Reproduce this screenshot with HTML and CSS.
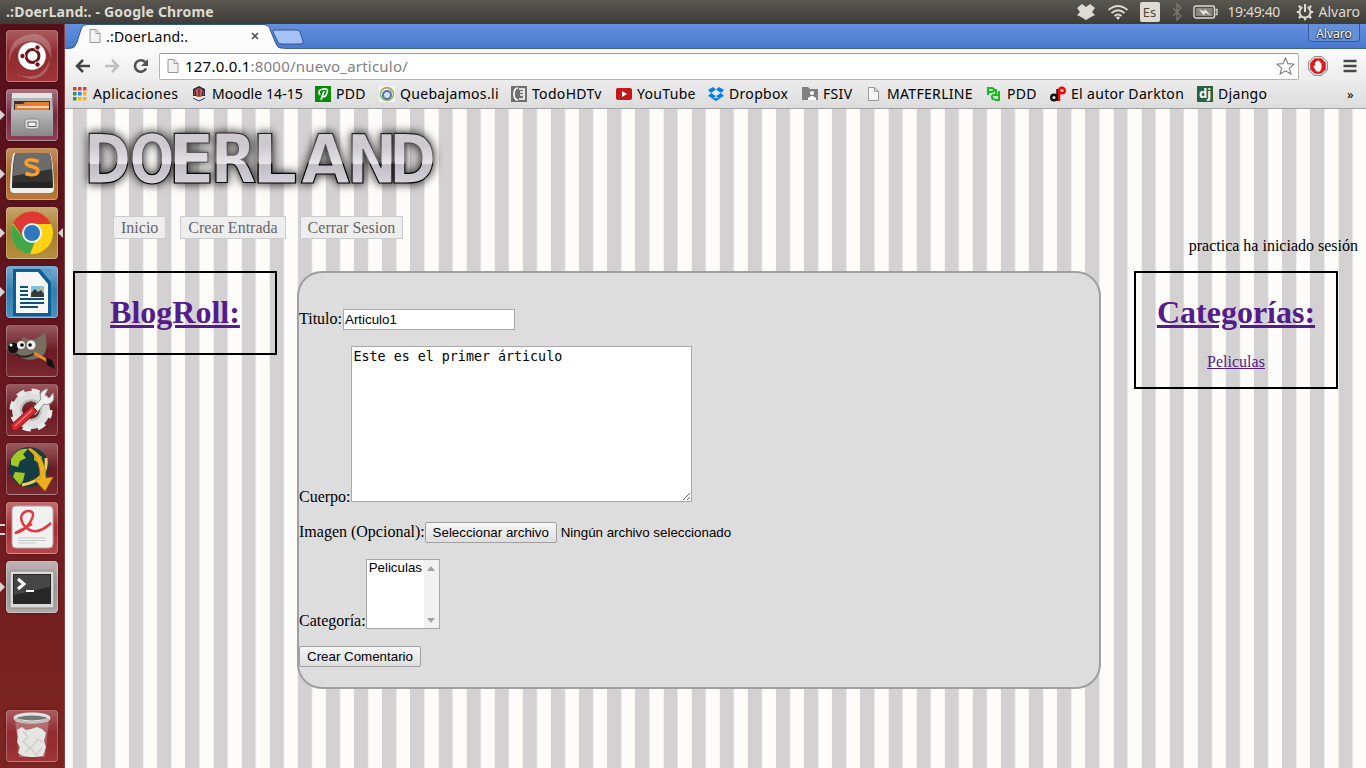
FILE: index.html
```html
<!DOCTYPE html>
<html lang="es">
<head>
<meta charset="utf-8">
<title>.:DoerLand:.</title>
<link rel="stylesheet" href="styles.css">
</head>
<body>
<header class="panel">
  <span class="panel-title">.:DoerLand:. - Google Chrome</span>
  <div class="indicators">
    <svg class="i-drop" width="20" height="18" viewBox="0 0 20 18"><path fill="#dfdbd2" d="M6 1l4 3 4-3 5 4-3 4 3 3-4 2-5 3-5-3-4-2 3-3-3-4z"/></svg>
    <svg class="i-wifi" width="22" height="18" viewBox="0 0 22 18" fill="none" stroke="#dfdbd2" stroke-width="1.700"><path d="M1.500 7q9.500-8 19 0M4.500 10q6.500-5.500 13 0M7.500 13q3.500-3 7 0"/><path fill="#dfdbd2" stroke="none" d="M8.800 14.300q2.200-1.500 4.400 0L11 17z"/></svg>
    <span class="lang">Es</span>
    <svg class="i-bt" width="12" height="18" viewBox="0 0 12 18" fill="none" stroke="#7d7b74" stroke-width="1.300"><path d="M2 5l8 8-4 4V1l4 4-8 8"/></svg>
    <svg class="i-bat" width="25" height="14" viewBox="0 0 25 14"><rect x="1" y="1" width="20.500" height="12" rx="2" fill="none" stroke="#dfdbd2" stroke-width="1.400"/><rect x="3" y="3" width="16.500" height="8" fill="#88867e"/><path d="M22.500 4.500h1.500v5h-1.500" fill="none" stroke="#dfdbd2" stroke-width="1.300"/><path d="M5.500 4l5.500 2.500L12 4l5.500 6.500-5.500-3-1 3z" fill="#eeeae2"/></svg>
    <span class="clock">19:49:40</span>
    <svg class="i-gear" width="18" height="18" viewBox="0 0 18 18" fill="none" stroke="#dfdbd2"><path stroke-width="2" d="M6.500 4.200a5.500 5.500 0 1 0 5 0M9 1v8"/><path stroke-width="2.200" d="M4.500 4.500L2.800 2.800M13.500 4.500l1.700-1.700M3.500 9H.8M14.500 9h2.700M4.800 13.200l-1.900 1.900M13.200 13.200l1.900 1.900M9 14.500v2.700"/></svg>
    <span>Alvaro</span>
  </div>
</header>
<div class="desktop">
<nav class="launcher">
  <div class="tile red"><svg viewBox="0 0 52 52"><path d="M3 33Q1 5 29 4Q48 7 45 29Q40 10 24 11Q6 13 3 33M9 44Q37 53 44 28Q43 49 23 49" fill="#fff" opacity=".22"/><circle cx="26" cy="26" r="13.800" fill="#fff"/><circle cx="26.500" cy="26" r="6.500" fill="none" stroke="#6e1519" stroke-width="3"/><g fill="#6e1519" stroke="#fff" stroke-width="1"><circle cx="16.500" cy="26" r="2.700"/><circle cx="31.500" cy="17.500" r="2.700"/><circle cx="31.500" cy="34.500" r="2.700"/></g></svg></div>
  <div class="tile plum on"><svg viewBox="0 0 52 52"><path d="M6 5h40l1 17v25H5V22z" fill="#b5b5b5"/><path d="M6 4h40v5H6z" fill="#e3e3e3"/><path d="M8 12h36v10H8z" fill="#383434"/><path d="M9 15h8l2-2h24v9H9z" fill="#e47c31"/><path d="M11 18h32" stroke="#fff2de" stroke-width="1.500"/><path d="M6 21h40l1 26H5z" fill="url(#metal)"/><rect x="19" y="30" width="14" height="10" rx="2.500" fill="#ddd" stroke="#858585"/><rect x="22" y="33" width="8" height="4.500" fill="#eee" stroke="#666"/></svg></div>
  <div class="tile orange on"><svg viewBox="0 0 52 52"><path d="M8 5Q5 8 4 40q0 5 4 5h36q4 0 4-5Q47 8 44 5z" fill="#eee"/><path d="M10 5h33q3 1 4 31v3H6v-3Q7 6 10 5z" fill="#333"/><path d="M10 5h33q2 1 3 16L7 28Q8 7 10 5z" fill="#6c6c6c"/><path d="M7 34h39l1 6H6z" fill="#252525"/><path d="M32.500 13.500q-12-4-12.500 1.500c0 4 12 3 12 7.500 0 5-7 5-12.500 3" fill="none" stroke="#ff9d27" stroke-width="3.500"/></svg></div>
  <div class="tile gold on active"><svg viewBox="0 0 52 52"><circle cx="26" cy="26" r="21" fill="#ffd213"/><path d="M16 30L7.500 16 12 10l18 22-6 15A21 21 0 0 1 7 17z" fill="#43a746"/><path d="M7 16A21 21 0 0 1 45 17H26L17 29z" fill="#df3936"/><circle cx="26" cy="26" r="10" fill="#f5f5f5"/><circle cx="26" cy="26" r="8" fill="#2f78bd"/></svg></div>
  <div class="tile blue on"><svg viewBox="0 0 52 52"><path d="M7 3h28l10 11v36H7z" fill="#0e5c91"/><path d="M34 3h11v13z" fill="#5b9bc5"/><path d="M10 6h22l10 12v29H10z" fill="#f6f7f7"/><path d="M14 21h8M14 25h8M14 29h8M14 33h24M14 37h24M14 41h18" stroke="#0e5279" stroke-width="2"/><path d="M25 20h13v11H25z" fill="#80c3e8"/><path d="M25 31v-4l4-4 3 3 3-2 3 4v3z" fill="#383838"/><circle cx="35" cy="22" r="1.500" fill="#ffb31b"/></svg></div>
  <div class="tile wine"><svg viewBox="0 0 52 52"><path d="M13 17l5-5q9 7 21-5 5 22-6 26-16 5-23-5z" fill="#766e60"/><ellipse cx="7" cy="23" rx="5.500" ry="6" fill="#111" stroke="#555"/><circle cx="5" cy="20" r="1.500" fill="#fff"/><circle cx="15" cy="20" r="4" fill="#eee"/><circle cx="25" cy="20" r="4.500" fill="#eee"/><circle cx="16" cy="20" r="1.800"/><circle cx="24" cy="20" r="1.800"/><path d="M10 29q8 6 19-1" fill="none" stroke="#282622" stroke-width="2"/><path d="M28 28l14 8" stroke="#e58b28" stroke-width="3"/><path d="M40 33l6 2 3 9-8-4z" fill="#111"/></svg></div>
  <div class="tile wine"><svg viewBox="0 0 52 52"><circle cx="25" cy="26" r="14" fill="none" stroke="#dedede" stroke-width="10"/><circle cx="25" cy="26" r="19" fill="none" stroke="#e8e8e8" stroke-width="5" stroke-dasharray="8 6.920"/><circle cx="25" cy="26" r="10" fill="none" stroke="#bababa" stroke-width="2"/><path d="M25 26L35 15q-3-7 5-10l2 0-3 6 4 3 4-5q3 8-4 11-3 1-5 0L29 31z" fill="#eee" stroke="#8e8e8e"/><path d="M26 22l5 5-20 19q-6 2-6-5z" fill="#d6282d" stroke="#871216"/><path d="M26 26L9 42" stroke="#ee7775" stroke-width="1.500"/></svg></div>
  <div class="tile wine"><svg viewBox="0 0 52 52"><circle cx="23" cy="24" r="20" fill="#143e43"/><path d="M5 16Q12 4 22 6l-5 5 3 4-6 3-2 6-7-2zM9 29l10 1-2 8-3 4-7-8zM28 9l8 5-2 7-6-4z" fill="#a1c727"/><path d="M16 42q27-5 24-27" fill="none" stroke="#f3cd55" stroke-width="3"/><path d="M24 5q15 7 16 30l7-1-8 14-11-12 6 0Q35 16 22 6z" fill="#edaf1e" stroke="#b67d0c" stroke-width=".7"/></svg></div>
  <div class="tile crimson on double"><svg viewBox="0 0 52 52"><rect x="6" y="4" width="41" height="42" rx="4" fill="#f1f1f1" stroke="#aaa"/><path d="M45 21q-17 16-28 1-5-10 4-13 11-1 2 13-6 8-14 9 10-5 17-9" fill="none" stroke="#dc3b45" stroke-width="2.500"/><path d="M12 36h28M12 38.500h28M12 41h18" stroke="#c7c7c7" stroke-width="1"/></svg></div>
  <div class="tile silver on"><svg viewBox="0 0 52 52"><rect x="4" y="10" width="44" height="37" rx="1" fill="#d9d9d9" stroke="#888"/><rect x="7" y="13" width="38" height="30" fill="#272727"/><path d="M8 14h36v12L8 34z" fill="#464646"/><path d="M12 18l6 5-6 5" fill="none" stroke="#fff" stroke-width="3"/><path d="M20 30h8" stroke="#fff" stroke-width="2"/></svg></div>
  <div class="tile red bin"><svg viewBox="0 0 52 52"><path d="M9 9h34l-4 38H13z" fill="#fff" opacity=".25"/><path d="M11 20l5-3 4 3 5-1 6-2 5 2 4 4-2 8 2 6-3 9-8 1-5 0-7-1-5-3 2-6-3-5 1-5z" fill="#e5e5e3"/><path d="M17 21l5 6-5 5 8 6 7-9 5 4M19 43l5-6 6 8 6-7" fill="none" stroke="#cfcecb" stroke-width="1.500"/><ellipse cx="26" cy="8" rx="17" ry="4" fill="#787674" stroke="#e4e4e4" stroke-width="3"/><path d="M9 9q17 7 34 0" stroke="#bbb" stroke-width="2" fill="none"/></svg></div>
</nav>
<main class="browser">
  <div class="tabs">
    <svg class="tab-shape" width="245" height="25"><path d="M0 24.500h2q4 0 6-6L12.500 4q1-3 5-3H195q4 0 5.500 3l6 15q2 5.500 6 5.500h2V25H0z" fill="#fcfcfc"/><path d="M0 24h2q4 0 6-6L12.500 4q1-3.500 5-3.500H195q4 0 5.500 3.500l6 15q2 5 6 5" fill="none" stroke="#34568f"/><path d="M206 6h22q2 0 3 2l3 9q1 3-2 3h-19q-3 0-4-2l-5-10q-1-2 2-2z" fill="#a4c2f5" stroke="#34568f"/></svg>
    <div class="tab"><svg class="page" viewBox="0 0 12 14"><path d="M1 .5h6l4 4v9H1zM7 .5v4h4" fill="#f3f3f3" stroke="#999"/></svg><span class="tab-title">.:DoerLand:.</span><svg class="close" width="8" height="8"><path d="M1 1l6 6M7 1L1 7" stroke="#555" stroke-width="1.700"/></svg></div>
    <span class="profile">Alvaro</span>
  </div>
  <div class="toolbar">
    <svg width="16" height="16" viewBox="0 0 16 16"><path d="M15 8H3M8 2L2 8l6 6" fill="none" stroke="#444" stroke-width="2.500"/></svg>
    <svg class="forward" width="16" height="16" viewBox="0 0 16 16"><path d="M1 8h12M8 2l6 6-6 6" fill="none" stroke="#bebebe" stroke-width="2.500"/></svg>
    <svg class="reload" width="16" height="16" viewBox="0 0 16 16"><path d="M12 4A5.800 5.800 0 1 0 13 10.500" fill="none" stroke="#505050" stroke-width="2.600"/><path d="M15 1v7H8z" fill="#505050"/></svg>
    <div class="omnibox"><svg class="page" viewBox="0 0 12 14"><path d="M1 .5h6l4 4v9H1zM7 .5v4h4" fill="#f3f3f3" stroke="#999"/></svg><span class="url"><b>127.0.0.1</b>:8000/nuevo_articulo/</span><svg class="star" width="19" height="18" viewBox="0 0 20 19"><path d="M10 1l2.600 6 6.400.5-4.900 4.200 1.600 6.300-5.700-3.400L4.300 18l1.600-6.300L1 7.500 7.400 7z" fill="#fff" stroke="#777" stroke-width="1.100"/></svg></div>
    <svg class="adblock" width="20" height="20" viewBox="0 0 20 20"><path d="M6 .7h8L19.300 6v8L14 19.300H6L.7 14V6z" fill="#fff" stroke="#777"/><path d="M6.700 2.200h6.600l4.500 4.500v6.600l-4.500 4.500H6.700l-4.500-4.500V6.700z" fill="#e1191b"/><path d="M6 9l1 1.500V6h1.200V5h1.500v-.5h1.300V5.500h1.300V7h1.200v5l-1.500 3.500H8.500L5.500 11z" fill="#fff"/></svg>
    <svg width="14" height="14"><path d="M.5 2h13M.5 7h13M.5 12h13" stroke="#484848" stroke-width="2.700"/></svg>
  </div>
  <div class="bookmarks">
    <span class="bm w118"><svg viewBox="0 0 16 16"><g><path d="M0 1h3.500v3.500H0zM5 1h3.500v3.500H5zM10 1h3.500v3.500H10z" fill="#e93c31"/><path d="M0 6h3.500v3.500H0zM0 11h3.500v3.500H0z" fill="#219a52"/><path d="M5 6h3.500v3.500H5z" fill="#2482ee"/><path d="M10 6h3.500v3.500H10zM5 11h3.500v3.500H5zM10 11h3.500v3.500H10z" fill="#f8b313"/></g></svg><i class="s1">Aplicaciones</i></span>
    <span class="bm w124"><svg viewBox="0 0 16 16"><path d="M2 0h12v11l-6 5-6-5z" fill="#eee"/><path d="M2 3l6-3 6 3v7H2z" fill="#282b4d"/><path d="M3 8q0-5 5-6 5 1 5 6l-3 3H6z" fill="#c95945"/><path d="M8 10V3M5 10L4 5M11 10l1-5M2 12l6 3 6-3" fill="none" stroke="#292b4c"/></svg><i class="s2">Moodle 14-15</i></span>
    <span class="bm w64"><svg viewBox="0 0 16 16"><path d="M0 0h16v16H0z" fill="#078d0a"/><path d="M6 14l3-9M5 9Q2 4 8 3t4 4-4 3" fill="none" stroke="#fff" stroke-width="1.700"/></svg><i>PDD</i></span>
    <span class="bm w132"><svg viewBox="0 0 16 16"><path d="M0 0h16v16H0z" fill="#f6f6f4"/><circle cx="8" cy="8" r="6.500" fill="none" stroke="#93ba68" stroke-width="1.600"/><circle cx="8" cy="9" r="4" fill="#d4dff0" stroke="#5571a9" stroke-width="2"/><path d="M3 4q5-5 10 2" fill="none" stroke="#cf8969"/></svg><i>Quebajamos.li</i></span>
    <span class="bm w105"><svg viewBox="0 0 16 16"><path d="M0 0h16v16H0z" fill="#6f6f6f"/><path d="M7 2Q3 2 3 8t4 6M8 3h5v10H8M9 6h3M9 9h3" fill="none" stroke="#fff" stroke-width="1.700"/></svg><i>TodoHDTv</i></span>
    <span class="bm w92"><svg viewBox="0 0 16 16"><rect y="2" width="16" height="12" rx="2" fill="#c41717"/><path d="M6 5l5 3-5 3z" fill="#fff"/></svg><i>YouTube</i></span>
    <span class="bm w94"><svg viewBox="0 0 16 16"><path d="M5 1l3 2.500 3-2.500 5 3-3 3 3 3-5 2.500-3-2.500-3 2.500-5-2.500 3-3-3-3zM3 12l5 3 5-3" fill="#087de7"/><path d="M8 3.500L13 7l-5 3-5-3z" fill="#e6eff8"/></svg><i>Dropbox</i></span>
    <span class="bm w64"><svg viewBox="0 0 16 16"><path d="M0 1h6l2 2h8v11H0z" fill="#808080"/><circle cx="10" cy="7" r="2" fill="#fff"/><path d="M6 14v-2l3-2h2l3 2v2z" fill="#fff"/></svg><i>FSIV</i></span>
    <span class="bm w120"><svg viewBox="0 0 16 16"><path d="M2.500 1.500h6l4 4v9h-10zM8.500 1.500v4h4" fill="#f7f7f7" stroke="#999"/></svg><i>MATFERLINE</i></span>
    <span class="bm w64"><svg viewBox="0 0 16 16" fill="none" stroke="#18bc18" stroke-width="2"><path d="M2 9V2h3q3 0 3 2t-3 2H2M9 13q-3 1-3-2t3-2h4M13 5v9H9M7 4h3v4"/></svg><i>PDD</i></span>
    <span class="bm w147"><svg viewBox="0 0 16 16" fill="none" stroke-width="2.400"><circle cx="4" cy="11.500" r="2.800" stroke="#111"/><path d="M7.500 3v12" stroke="#111"/><circle cx="12" cy="4.500" r="2.800" stroke="#f00"/><path d="M9 3.500V15" stroke="#f00"/></svg><i>El autor Darkton</i></span>
    <span class="bm"><span class="django">dj</span><i>Django</i></span>
    <span class="more">»</span>
  </div>
  <section class="site">
    <svg class="logo" width="390" height="90" viewBox="0 0 390 90">
      <defs>
        <linearGradient id="metal" x1="0" y1="0" x2="0" y2="1"><stop offset="0" stop-color="#bdbdbd"/><stop offset="1" stop-color="#888"/></linearGradient>
        <linearGradient id="chrome" gradientUnits="userSpaceOnUse" x1="0" y1="16" x2="0" y2="67"><stop offset="0" stop-color="#cfcbd1"/><stop offset=".25" stop-color="#cdc9cf"/><stop offset=".6" stop-color="#e6e5e8"/><stop offset=".62" stop-color="#bfbdc3"/><stop offset="1" stop-color="#d6d3da"/></linearGradient>
        <linearGradient id="edge" gradientUnits="userSpaceOnUse" x1="0" y1="16" x2="0" y2="67"><stop offset="0" stop-color="#222"/><stop offset=".55" stop-color="#777"/><stop offset=".62" stop-color="#000"/></linearGradient>
      </defs>
      <text class="logo-letters"><tspan x="11" y="66" textLength="47" lengthAdjust="spacingAndGlyphs">D</tspan><tspan x="56.500" y="66" textLength="45" lengthAdjust="spacingAndGlyphs">O</tspan><tspan x="95" y="66" textLength="47" lengthAdjust="spacingAndGlyphs">E</tspan><tspan x="137.500" y="66" textLength="46" lengthAdjust="spacingAndGlyphs">R</tspan><tspan x="178.500" y="66" textLength="46" lengthAdjust="spacingAndGlyphs">L</tspan><tspan x="228" y="66" textLength="49" lengthAdjust="spacingAndGlyphs">A</tspan><tspan x="273.500" y="66" textLength="51" lengthAdjust="spacingAndGlyphs">N</tspan><tspan x="316" y="66" textLength="47" lengthAdjust="spacingAndGlyphs">D</tspan></text>
    </svg>
    <nav class="menu"><a>Inicio</a><a>Crear Entrada</a><a>Cerrar Sesion</a></nav>
    <p class="session">practica ha iniciado sesión</p>
    <div class="columns">
      <aside class="box roll"><h1>BlogRoll:</h1></aside>
      <form class="article">
        <div class="row"><label class="title-label">Titulo:</label><input class="field" value="Articulo1"></div>
        <div class="row body-row"><label>Cuerpo:</label><textarea class="area" spellcheck="false">Este es el primer árticulo</textarea></div>
        <div class="row file-row"><label>Imagen (Opcional):</label><button type="button" class="btn choose">Seleccionar archivo</button><span class="file">Ningún archivo seleccionado</span></div>
        <div class="row cat-row"><label>Categoría:</label><div class="list"><span>Peliculas</span><div class="scroll"><svg width="8" height="5"><path d="M0 5l4-5 4 5z" fill="#a3a3a3"/></svg><svg width="8" height="5"><path d="M0 0l4 5 4-5z" fill="#a3a3a3"/></svg></div></div></div>
        <button type="button" class="btn send">Crear Comentario</button>
      </form>
      <aside class="box cats"><h1>Categorías:</h1><a>Peliculas</a></aside>
    </div>
  </section>
</main>
</div>
</body>
</html>
```
FILE: styles.css
```css
* { box-sizing: border-box; }
body { margin: 0; width: 1366px; height: 768px; overflow: hidden; font-family: "Noto Sans", sans-serif; }
svg { display: block; flex: none; }
.panel { height: 24px; display: flex; justify-content: space-between; align-items: center; padding: 0 6px; background: linear-gradient(#595750, #3d3c38); color: #dfdbd2; font-size: 14px; line-height: 24px; white-space: nowrap; }
.panel-title { font-weight: 700; font-size: 14px; letter-spacing: .18px; }
.indicators { display: flex; align-items: center; }
.i-drop { margin-right: 11px; }
.i-wifi { margin-right: 11px; }
.lang { width: 20px; height: 20px; margin-right: 11px; border-radius: 2px; background: #dfdbd2; color: #4a4842; font-size: 13px; line-height: 20px; text-align: center; }
.i-bt { margin-right: 10px; }
.i-bat { margin-right: 10px; }
.clock { width: 57px; margin-right: 11px; font-size: 14px; letter-spacing: -.4px; }
.i-gear { margin-right: 5px; }
.desktop { display: flex; height: 744px; }
.launcher { width: 65px; flex: none; display: flex; flex-direction: column; gap: 7px; padding: 6px 0 6px 6px; background: linear-gradient(#55101a, #681820 50%, #7d2521); border-right: 1px solid #894142; }
.tile { position: relative; width: 52px; height: 52px; flex: none; border-radius: 4px; border: 1px solid rgba(255,255,255,.25); box-shadow: 0 0 3px rgba(0,0,0,.35); }
.tile svg { width: 52px; height: 52px; margin: -1px; }
.red { background: linear-gradient(#a85a5d, #902b2f 45%, #9e3436); }
.plum { background: linear-gradient(#a37180, #732b3e 50%, #8c4055); }
.orange { background: linear-gradient(#c18d5d, #a56729 50%, #bb7938); }
.gold { background: linear-gradient(#c4a468, #a77d30 50%, #b68d3d); }
.blue { background: linear-gradient(#74abcf, #337fae 50%, #4991bf); }
.wine { background: linear-gradient(#98595f, #691b22 50%, #7b2930); }
.crimson { background: linear-gradient(#c36a70, #a82d35 50%, #b9444a); }
.silver { background: linear-gradient(#bdb1b4, #a0979a 50%, #b2a7a9); }
.bin { margin-top: auto; }
.on::before { content: ""; position: absolute; left: -7px; top: 20px; border: 5px solid transparent; border-left-color: #d9d1d2; border-right: 0; }
.active::after { content: ""; position: absolute; right: -6px; top: 20px; border: 5px solid transparent; border-right-color: #d9d1d2; border-left: 0; }
.double::before { top: 21px; width: 5px; height: 7px; border: solid #d9d1d2; border-width: 2px 0; }
.browser { flex: 1; min-width: 0; display: flex; flex-direction: column; }
.tabs { position: relative; height: 25px; display: flex; justify-content: space-between; background: linear-gradient(#6391de, #4b79cf); border-bottom: 1px solid #3e639f; }
.tab-shape { position: absolute; left: 4px; top: 0; }
.tab { position: relative; width: 194px; display: flex; align-items: center; padding-left: 24px; font-size: 14px; }
.page { width: 12px; height: 14px; }
.tab-title { margin-left: 5px; flex: 1; letter-spacing: .2px; }
.profile { position: relative; width: 52px; height: 18px; margin-right: 6px; border: 1px solid #365a99; border-top: 0; border-radius: 0 0 4px 4px; background: #648fd9; color: #fff; font-size: 12px; line-height: 20px; text-align: center; text-shadow: 0 0 2px #111, 0 1px 1px #111; }
.toolbar { height: 32px; display: flex; align-items: center; padding: 2px 9px 0 10px; background: linear-gradient(#fbfbfb, #ececec); }
.forward { margin-left: 13px; }
.reload { margin-left: 13px; }
.omnibox { width: 1140px; height: 27px; flex: none; margin-left: 10px; display: flex; align-items: center; padding: 0 3px 0 7px; border: 1px solid #b3b3b3; border-top-color: #999; border-radius: 2px; background: #fff; }
.url { flex: 1; margin-left: 6px; font-size: 15px; letter-spacing: .22px; color: #808080; }
.url b { color: #000; font-weight: 400; }
.adblock { margin: 0 15px 0 9px; }
.bookmarks { height: 28px; display: flex; align-items: center; padding: 0 12px 0 8px; background: linear-gradient(#ececec, #dcdcdc); border-bottom: 1px solid #a3a3a3; font-size: 14px; letter-spacing: .32px; }
.bm { display: flex; align-items: center; flex: none; white-space: nowrap; height: 20px; margin-top: -2px; }
.bm svg { width: 16px; height: 16px; }
.bm i { font-style: normal; margin-left: 5px; }
.bm .s1 { margin-left: 4px; }
.bm .s2 { letter-spacing: .08px; }
.w118 { width: 118px; }
.w124 { width: 124px; }
.w64 { width: 64px; }
.w132 { width: 132px; }
.w105 { width: 105px; }
.w92 { width: 92px; }
.w94 { width: 94px; }
.w120 { width: 120px; }
.w147 { width: 147px; }
.django { width: 16px; height: 16px; background: #2b6143; color: #fff; font-size: 13px; font-weight: 700; line-height: 14px; letter-spacing: 0; text-align: center; }
.more { margin-left: auto; margin-top: -2px; font-size: 13px; }
.site { flex: 1; padding: 8px 8px 0; background: linear-gradient(90deg, #fdfcf8, #fdfcf8); background: repeating-linear-gradient(90deg, #d3d1d2 0, #d3d1d2 13.200px, #f1f0ed 14.200px, #fcfcfb 15px, #fdfcf8 27px, #f0efed 28.125px) 8px 0 / 225px 100%; font: 16px/18px "Liberation Serif", serif; color: #000; }
.logo { height: 90px; overflow: visible; }
.logo-letters { font: 700 68.500px "DejaVu Sans", sans-serif; fill: url(#chrome); stroke: url(#edge); stroke-width: 1.200px; filter: drop-shadow(0 0 4px rgba(0,0,0,.65)) drop-shadow(0 0 5px rgba(0,0,0,.35)); }
.menu { display: flex; gap: 14px; margin: 9px 0 0 40px; }
.menu a { height: 23px; padding: 0 7px; border: 1px solid #ccc; background: #eee; color: #666; line-height: 22px; }
.session { margin: -2px 0 0; height: 34px; line-height: 18px; text-align: right; }
.columns { display: flex; align-items: flex-start; }
.box { width: 204px; border: 2px solid #000; text-align: center; color: #551a8b; text-decoration: underline; }
.box h1 { margin: 20px 0 22px; font-size: 32px; line-height: 38px; }
.roll { height: 84px; }
.cats { height: 118px; margin-left: 33px; }
.article { width: 804px; height: 418px; margin-left: 20px; padding-top: 36px; border: 2px solid #a0a0a0; border-radius: 25px; background: #ddd; }
.row { display: flex; align-items: flex-end; height: 21px; }
.row label { line-height: 18px; padding-bottom: 2px; }
.row .title-label { width: 44px; }
.field { width: 172px; height: 21px; padding: 1px; border: 1px solid #a9a9a9; background: #fff; font: 13.333px "Liberation Sans", sans-serif; }
.body-row { height: 156px; margin-top: 16px; }
.body-row label { padding-bottom: 0; margin-bottom: -4px; }
.cat-row label { padding-bottom: 0; margin-bottom: -1px; }
.area { width: 341px; height: 156px; margin: 0; padding: 2px; border: 1px solid #a9a9a9; background: #fff; font: 13.333px "DejaVu Sans Mono", monospace; }
.file-row { margin-top: 20px; }
.btn { height: 21px; padding: 0; border: 1px solid #a0a0a0; border-radius: 2px; background: linear-gradient(#f6f6f6, #dedede); color: #000; font: 13.333px "Liberation Sans", sans-serif; }
.choose { width: 132px; }
.file { margin-left: 4px; font: 13.333px/21px "Liberation Sans", sans-serif; }
.cat-row { height: 70px; margin-top: 16px; }
.list { width: 74px; height: 70px; display: flex; justify-content: space-between; padding-left: 2px; border: 1px solid #a9a9a9; background: #fff; font: 13.333px/16px "Liberation Sans", sans-serif; }
.scroll { width: 15px; display: flex; flex-direction: column; justify-content: space-between; align-items: center; padding: 6px 0 5px; background: #f1f1f1; }
.send { display: block; width: 122px; margin-top: 17px; }
```
